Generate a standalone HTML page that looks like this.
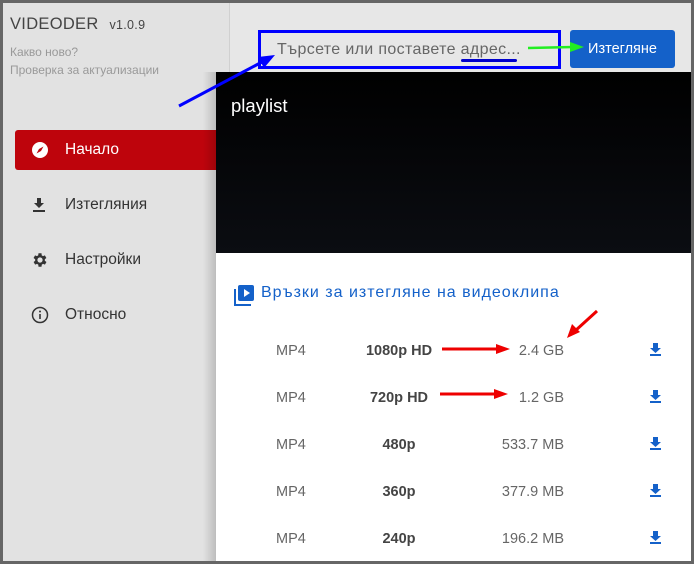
<!DOCTYPE html>
<html><head><meta charset="utf-8"><style>
*{margin:0;padding:0;box-sizing:border-box}
body{width:694px;height:564px;overflow:hidden;background:#fff;font-family:"Liberation Sans","DejaVu Sans",sans-serif;position:relative}
.frame{position:absolute;left:0;top:0;width:694px;height:564px;border:3px solid #666;background:#e7e7e7;overflow:hidden}
.a{position:absolute}
.side{left:0;top:0;width:227px;height:564px;background:#e2e2e2;border-right:1px solid #d0d0d0}
.menu{position:absolute;left:12px;width:205px;height:40px;display:flex;align-items:center;font-size:15.5px;color:#333}
.menu svg{position:absolute;left:16px}
.menu span{position:absolute;left:50px}
.row{position:absolute;left:213px;width:476px;height:20px;font-size:14.5px;color:#666}
.row div{position:absolute;top:0}
.c{width:120px;text-align:center;font-weight:bold;color:#444;left:123px}
.s{width:150px;text-align:right;left:198px}
</style></head><body>
<div class="frame">
<div class="a side"></div>
<div class="a" style="left:7px;top:12px;font-size:16.5px;color:#444;letter-spacing:.3px">VIDEODER <span style="font-size:12.5px;margin-left:6px">v1.0.9</span></div>
<div class="a" style="left:7px;top:42px;font-size:12px;color:#999">Какво ново?</div>
<div class="a" style="left:7px;top:60px;font-size:12px;color:#999">Проверка за актуализации</div>

<div class="menu" style="top:127px;background:#be040c;border-radius:3px;color:#fff">
<svg width="18" height="18" viewBox="0 0 18 18"><circle cx="9" cy="9" r="8" fill="#fff"/><path d="M12.5 5.5 L10 10 L5.5 12.5 L8 8Z" fill="#be040c"/></svg><span>Начало</span></div>
<div class="menu" style="top:182px"><svg width="16" height="16" viewBox="0 0 16 16"><path d="M6 1h4v5h3l-5 5-5-5h3z" fill="#333"/><rect x="2" y="13" width="12" height="2" fill="#333"/></svg><span>Изтегляния</span></div>
<div class="menu" style="top:237px"><svg width="18" height="18" viewBox="0 0 24 24"><path fill="#333" d="M19.4 13a7.5 7.5 0 000-2l2.1-1.6-2-3.5-2.5 1a7 7 0 00-1.7-1L15 3h-4l-.4 2.9a7 7 0 00-1.7 1l-2.5-1-2 3.5L6.6 11a7.5 7.5 0 000 2l-2.1 1.6 2 3.5 2.5-1a7 7 0 001.7 1L11 21h4l.4-2.9a7 7 0 001.7-1l2.5 1 2-3.5zM13 15.5a3.5 3.5 0 110-7 3.5 3.5 0 010 7z" transform="translate(-1 0)"/></svg><span>Настройки</span></div>
<div class="menu" style="top:292px"><svg width="18" height="18" viewBox="0 0 18 18"><circle cx="9" cy="9" r="7.5" fill="none" stroke="#333" stroke-width="1.5"/><rect x="8.2" y="8" width="1.6" height="5" fill="#333"/><circle cx="9" cy="5.5" r="1" fill="#333"/></svg><span>Относно</span></div>

<div class="a" style="left:255px;top:27px;width:303px;height:39px;border:3px solid #0000ff"></div>
<div class="a" style="left:274px;top:38px;font-size:16px;color:#666;letter-spacing:.35px;white-space:nowrap">Търсете или поставете адрес...</div>
<div class="a" style="left:458px;top:56px;width:56px;height:3px;background:#0000cc;border-radius:2px"></div>
<div class="a" style="left:567px;top:27px;width:105px;height:38px;background:#1461c9;border-radius:3px;color:#fff;font-size:14.5px;line-height:38px;text-align:center">Изтегляне</div>

<div class="a" style="left:200px;top:69px;width:20px;height:495px;background:linear-gradient(to right,rgba(0,0,0,0),rgba(0,0,0,.25))"></div>
<div class="a" style="left:213px;top:69px;width:476px;height:181px;background:linear-gradient(#000,#0b0d12)"></div>
<div class="a" style="left:228px;top:92px;color:#fff;font-size:18.5px">playlist</div>
<div class="a" style="left:213px;top:250px;width:476px;height:320px;background:#fff"></div>

<svg class="a" style="left:231px;top:281px" width="22" height="22" viewBox="0 0 22 22"><path d="M1 5v16h16" fill="none" stroke="#1461c9" stroke-width="2"/><rect x="4" y="1" width="16" height="16" rx="2" fill="#1461c9"/><path d="M10 5v8l6-4z" fill="#fff"/></svg>
<div class="a" style="left:258px;top:281px;font-size:16px;color:#1461c9;letter-spacing:1px;white-space:nowrap">Връзки за изтегляне на видеоклипа</div>

<div class="row" style="top:340px"><div style="left:60px">MP4</div><div class="c">1080p HD</div><div class="s">2.4 GB</div></div>
<div class="row" style="top:387px"><div style="left:60px">MP4</div><div class="c">720p HD</div><div class="s">1.2 GB</div></div>
<div class="row" style="top:434px"><div style="left:60px">MP4</div><div class="c">480p</div><div class="s">533.7 MB</div></div>
<div class="row" style="top:481px"><div style="left:60px">MP4</div><div class="c">360p</div><div class="s">377.9 MB</div></div>
<div class="row" style="top:528px"><div style="left:60px">MP4</div><div class="c">240p</div><div class="s">196.2 MB</div></div>

<svg class="a" style="left:646px;top:340px" width="13" height="210" viewBox="0 0 13 210">
<g fill="#1461c9"><path d="M4 0h5v5h3l-5.5 5L1 5h3z"/><rect x="1" y="11" width="11" height="2"/></g>
<g fill="#1461c9" transform="translate(0,47)"><path d="M4 0h5v5h3l-5.5 5L1 5h3z"/><rect x="1" y="11" width="11" height="2"/></g>
<g fill="#1461c9" transform="translate(0,94)"><path d="M4 0h5v5h3l-5.5 5L1 5h3z"/><rect x="1" y="11" width="11" height="2"/></g>
<g fill="#1461c9" transform="translate(0,141)"><path d="M4 0h5v5h3l-5.5 5L1 5h3z"/><rect x="1" y="11" width="11" height="2"/></g>
<g fill="#1461c9" transform="translate(0,188)"><path d="M4 0h5v5h3l-5.5 5L1 5h3z"/><rect x="1" y="11" width="11" height="2"/></g>
</svg>
</div>
<svg class="a" style="left:0;top:0" width="694" height="564">
<g stroke="#0000ff" stroke-width="3" fill="#0000ff"><line x1="179" y1="106" x2="262" y2="62"/><path d="M275 55 L258 57 L264 68Z" stroke="none"/></g>
<g stroke="#22ee22" stroke-width="2.5" fill="#22ee22"><line x1="528" y1="48" x2="573" y2="47"/><path d="M584 47 L570 42 L570 52Z" stroke="none"/></g>
<g stroke="#ee0000" stroke-width="3" fill="#ee0000">
<line x1="442" y1="349" x2="500" y2="349"/><path d="M510 349 L496 344 L496 354Z" stroke="none"/>
<line x1="440" y1="394" x2="496" y2="394"/><path d="M508 394 L494 389 L494 399Z" stroke="none"/>
<line x1="597" y1="311" x2="575" y2="331"/><path d="M567 338 L572 324 L580 332Z" stroke="none"/></g>
</svg>
</body></html>
